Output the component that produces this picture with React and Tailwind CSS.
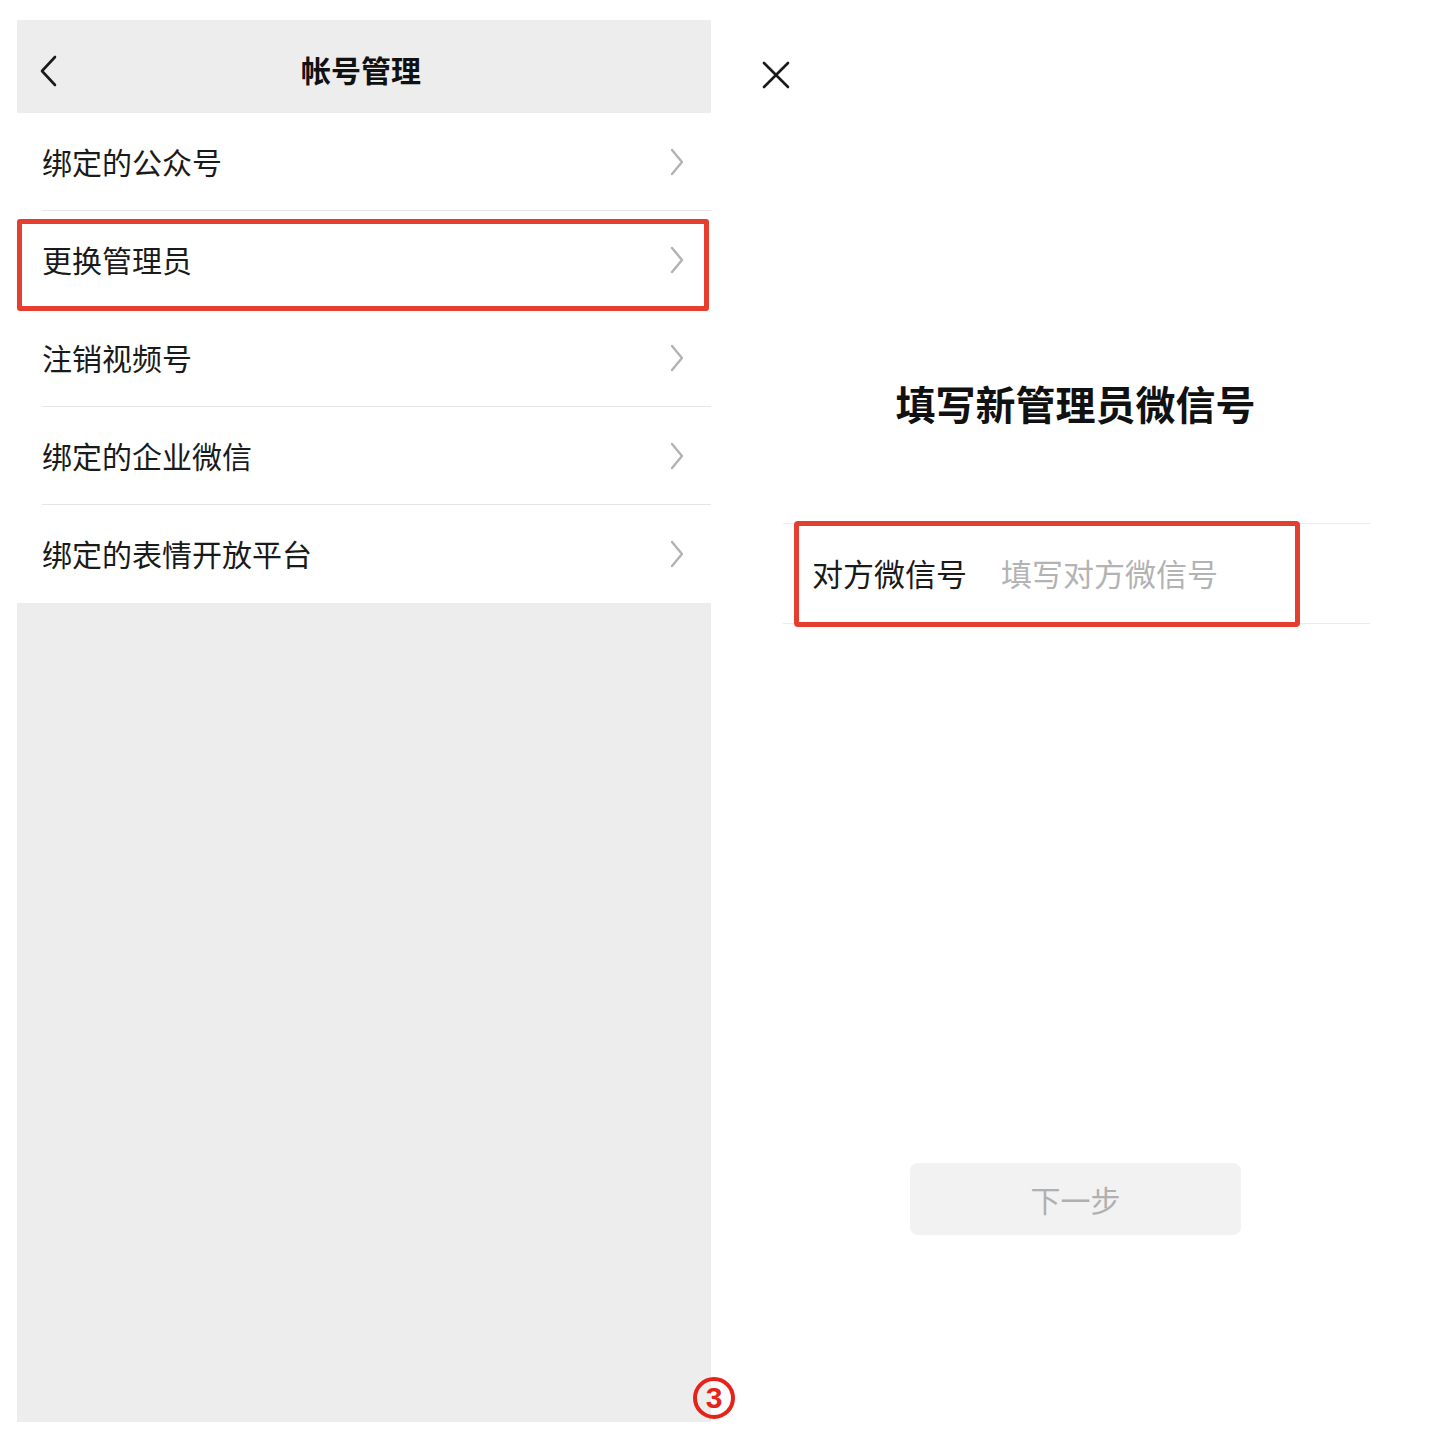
import React from "react";

const font = { fontFamily: '"Noto Sans CJK SC", "Noto Sans", sans-serif' };

function Chevron() {
  return (
    <svg width="16" height="28" viewBox="0 0 16 28" fill="none">
      <polyline points="3,2 13,14 3,26" stroke="#b2b2b2" strokeWidth="2.4" strokeLinecap="round" strokeLinejoin="round" />
    </svg>
  );
}

function Row({ label, sep = true, highlight = false }) {
  return (
    <div className="relative h-[98px] flex items-center">
      <div className="flex-1 flex items-center pl-[25px] pr-[26px]">
        <span className="flex-1 text-[30px] text-[#1a1a1a] leading-none mb-[2px]">{label}</span>
        <Chevron />
      </div>
      {sep && <div className="absolute left-[25px] right-0 bottom-0 h-px bg-[#e6e6e6]" />}
      {highlight && (
        <div className="absolute left-0 right-[2px] top-[8px] bottom-[-2px] border-[5px] border-[#e53d2f] rounded-[3px]" />
      )}
    </div>
  );
}

export default function App() {
  return (
    <div className="relative flex min-h-[1440px] bg-white" style={font}>
      {/* Left panel */}
      <div className="mt-[20px] ml-[17px] w-[694px] h-[1402px] bg-[#ededed] flex flex-col">
        <div className="relative h-[93px] flex items-center justify-center">
          <div className="absolute left-[22px] top-[35px]">
            <svg width="20" height="32" viewBox="0 0 20 32" fill="none">
              <polyline points="16,2 3,16 16,30" stroke="#1a1a1a" strokeWidth="2.6" strokeLinecap="round" strokeLinejoin="round" />
            </svg>
          </div>
          <span className="text-[30px] font-bold text-[#111] leading-none mr-[6px] mt-[4px]">帐号管理</span>
        </div>
        <div className="bg-white flex flex-col">
          <Row label="绑定的公众号" />
          <Row label="更换管理员" sep={false} highlight />
          <Row label="注销视频号" />
          <Row label="绑定的企业微信" />
          <Row label="绑定的表情开放平台" sep={false} />
        </div>
      </div>

      {/* Right panel */}
      <div className="flex-1 flex flex-col">
        <div className="pl-[51px] pt-[61px]">
          <svg width="28" height="28" viewBox="0 0 28 28" fill="none">
            <path d="M2 2 L26 26 M26 2 L2 26" stroke="#1a1a1a" strokeWidth="2.6" strokeLinecap="round" />
          </svg>
        </div>
        <div className="mt-[286px] text-center text-[40px] font-bold text-[#111] leading-[56px]">填写新管理员微信号</div>
        <div className="mt-[92px] ml-[72px] w-[587px] h-[101px] border-y border-[#ececec] relative flex items-center pl-[29px]">
          <span className="shrink-0 whitespace-nowrap w-[189px] text-[31px] text-[#1a1a1a] leading-none mb-[3px]">对方微信号</span>
          <span className="whitespace-nowrap text-[31px] text-[#b3b3b3] leading-none mb-[3px]">填写对方微信号</span>
          <div className="absolute left-[11px] top-[-3px] w-[506px] h-[106px] border-[5px] border-[#e53d2f] rounded-[4px]" />
        </div>
        <div className="mt-[539px] ml-[199px] w-[331px] h-[72px] rounded-[8px] bg-[#f2f2f2] flex items-center justify-center">
          <span className="text-[30px] text-[#b0b0b0] leading-none">下一步</span>
        </div>
      </div>

      <div className="absolute left-[693px] top-[1377px] w-[42px] h-[42px] rounded-full border-[4px] border-[#e5231b] flex items-center justify-center">
        <span className="text-[30px] font-bold text-[#e5231b] leading-none" style={{ fontFamily: '"Liberation Sans", Arial, sans-serif' }}>3</span>
      </div>
    </div>
  );
}
